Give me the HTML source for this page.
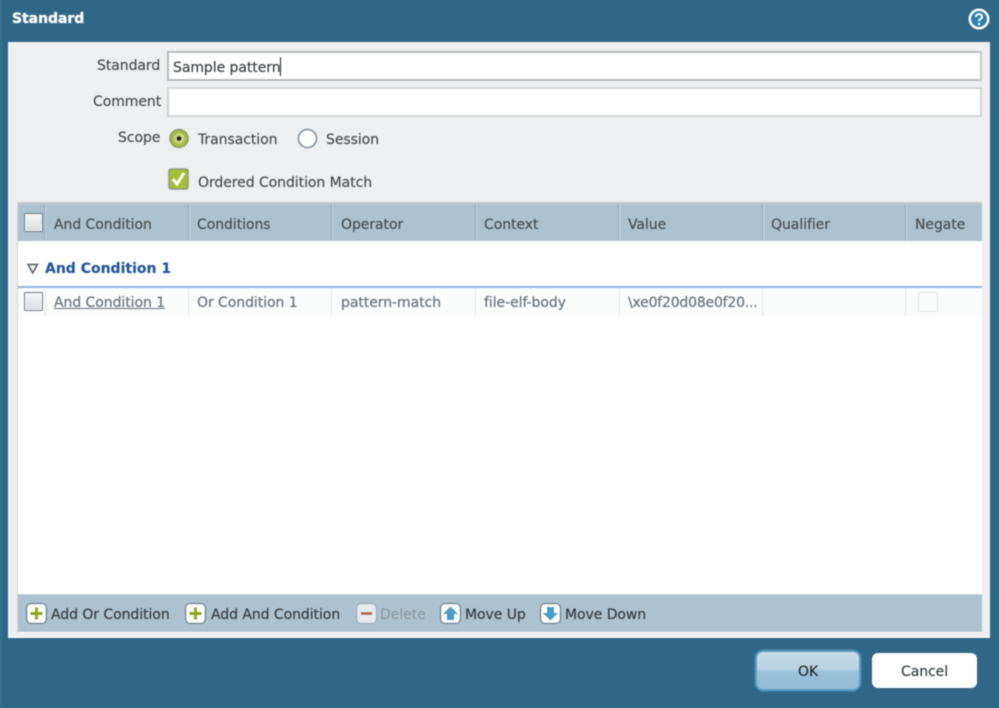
<!DOCTYPE html>
<html><head><meta charset="utf-8">
<style>
html,body{margin:0;padding:0;background:#306786}
body{width:999px;height:708px;overflow:hidden;position:relative;font-family:"DejaVu Sans","Liberation Sans",sans-serif;font-size:14px;color:#444b50}
#r{position:absolute;left:0;top:0;width:999px;height:708px;filter:blur(0.5px);overflow:hidden}
#r div,#r span.t{position:absolute;box-sizing:border-box;white-space:nowrap}
.t{position:absolute;line-height:18px;white-space:nowrap;letter-spacing:-.06px;text-shadow:0 0 .6px rgba(50,55,60,.55)}
.th{top:216px;color:#454d52}
.td{top:294px;color:#67737b}
.ft{top:606px;color:#33393d}
.sep{top:204px;width:2px;height:37px;background:#c5d5df;border-left:1px solid #93aaba}
.sep2{top:288px;width:1px;height:28px;background:#e4e7e9}
.ib{width:21px;height:21px;top:603px;border:1px solid #5e7686;border-radius:5px;background:#fff;box-shadow:inset 0 0 2px #cfd8de}
.cb{left:24px;width:19px;height:19px;background:linear-gradient(#f6f7f8,#d9dde0);border:1.5px solid #737e86;box-shadow:inset 0 0 0 1px #f2f3f4;border-radius:1px}
svg{position:absolute}
</style></head><body><div id="r">
<div style="left:0;top:0;width:2px;height:708px;background:#3a7191"></div>
<span class="t" style="left:12px;top:10px;color:#fff;font-weight:bold;font-size:14px;letter-spacing:-.05px;text-shadow:0 0 1px #fff">Standard</span>
<svg style="left:967px;top:7px" width="24" height="24" viewBox="0 0 24 24"><circle cx="12" cy="12" r="10.500" fill="#fff"/><circle cx="12" cy="12" r="8" fill="#2f7fb4"/><path d="M9 10c0-4 6-4 6 0 0 2-3 2-3 4" fill="none" stroke="#fff" stroke-width="2"/><circle cx="12" cy="17" r="1.200" fill="#fff"/></svg>

<div style="left:8px;top:42px;width:982px;height:596px;background:#eeeff0;border-bottom:2px solid #f7f8f8"></div>

<span class="t" style="left:97px;top:57px">Standard</span>
<div style="left:167px;top:51px;width:815px;height:30px;background:#fff;border:2px solid #b9bcbc;border-right-color:#c8caca"></div>
<span class="t" style="left:173px;top:59px;color:#363b3f">Sample pattern</span>
<div style="left:280px;top:57px;width:1px;height:19px;background:#222"></div>
<span class="t" style="left:93px;top:93px">Comment</span>
<div style="left:167px;top:87px;width:815px;height:30px;background:#fff;border:2px solid #d2d4d4"></div>
<span class="t" style="left:118px;top:129px">Scope</span>
<svg style="left:167px;top:126px" width="26" height="26" viewBox="0 0 26 26"><circle cx="12" cy="12.500" r="9" fill="#a4bf33" stroke="#8b9a80" stroke-width="1.500"/><circle cx="12" cy="12.500" r="5.500" fill="#c6d37c"/><circle cx="12" cy="12.500" r="2.300" fill="#222"/></svg>
<span class="t" style="left:198px;top:131px">Transaction</span>
<svg style="left:296px;top:126px" width="26" height="26" viewBox="0 0 26 26"><circle cx="11.500" cy="12.500" r="9" fill="#fff" stroke="#8d9ca8" stroke-width="1.800"/></svg>
<span class="t" style="left:326px;top:131px">Session</span>
<svg style="left:167px;top:167px" width="24" height="24" viewBox="0 0 24 24"><rect x="2" y="2" width="19" height="20" rx="2" fill="#a4bf33" stroke="#8f9a85" stroke-width="1.500"/><path d="M6 12l4 5 7-11" fill="none" stroke="#fff" stroke-width="3"/></svg>
<span class="t" style="left:198px;top:174px">Ordered Condition Match</span>

<div style="left:17px;top:202px;width:965px;height:431px;background:#fff;border-top:2px solid #c6c8c8;border-left:1px solid #d4d6d6"></div>
<div style="left:18px;top:204px;width:964px;height:37px;background:#adc2d1"></div>
<div class="cb" style="top:213px"></div>
<div class="sep" style="left:44px"></div><div class="sep" style="left:188px"></div><div class="sep" style="left:331px"></div><div class="sep" style="left:475px"></div><div class="sep" style="left:618px"></div><div class="sep" style="left:762px"></div><div class="sep" style="left:905px"></div>
<span class="t th" style="left:54px">And Condition</span>
<span class="t th" style="left:197px">Conditions</span>
<span class="t th" style="left:341px">Operator</span>
<span class="t th" style="left:484px">Context</span>
<span class="t th" style="left:628px">Value</span>
<span class="t th" style="left:771px">Qualifier</span>
<span class="t th" style="left:915px">Negate</span>

<svg style="left:26px;top:262px" width="14" height="14" viewBox="0 0 14 14"><path d="M2 2.500h9.500L6.700 11z" fill="#eef0f1" stroke="#5a6368" stroke-width="1.500"/></svg>
<span class="t" style="left:45px;top:260px;font-weight:bold;color:#22579e;letter-spacing:0">And Condition 1</span>
<div style="left:18px;top:286px;width:964px;height:2px;background:#8fb4e2"></div>
<div style="left:18px;top:288px;width:964px;height:28px;background:#fbfcfc"></div>
<div class="cb" style="top:292px"></div>
<div class="sep2" style="left:45px"></div><div class="sep2" style="left:188px"></div><div class="sep2" style="left:331px"></div><div class="sep2" style="left:475px"></div><div class="sep2" style="left:619px"></div><div class="sep2" style="left:762px"></div><div class="sep2" style="left:905px"></div>
<span class="t td" style="left:54px;text-decoration:underline">And Condition 1</span>
<span class="t td" style="left:197px">Or Condition 1</span>
<span class="t td" style="left:341px">pattern-match</span>
<span class="t td" style="left:484px">file-elf-body</span>
<span class="t td" style="left:628px;letter-spacing:-.2px">\xe0f20d08e0f20...</span>
<div style="left:918px;top:292px;width:20px;height:20px;background:#f9fafa;border:1px solid #e2e5e6;border-radius:2px"></div>

<div style="left:18px;top:594px;width:964px;height:38px;background:#adc2d1;border-top:1px solid #c3d2dc"></div>

<div class="ib" style="left:26px"></div>
<svg style="left:26px;top:603px" width="21" height="21" viewBox="0 0 21 21"><path d="M10.500 4.500v12M4.500 10.500h12" stroke="#8caa1f" stroke-width="3"/></svg>
<span class="t ft" style="left:51px">Add Or Condition</span>
<div class="ib" style="left:185px"></div>
<svg style="left:185px;top:603px" width="21" height="21" viewBox="0 0 21 21"><path d="M10.500 4.500v12M4.500 10.500h12" stroke="#8caa1f" stroke-width="3"/></svg>
<span class="t ft" style="left:211px">Add And Condition</span>
<div class="ib" style="left:356px;background:#e6ebef;border-color:#97a9b6"></div>
<svg style="left:356px;top:603px" width="21" height="21" viewBox="0 0 21 21"><path d="M5 10.500h11" stroke="#a8604c" stroke-width="2.500"/></svg>
<span class="t ft" style="left:380px;color:#8b979f;text-shadow:none">Delete</span>
<div class="ib" style="left:440px"></div>
<svg style="left:440px;top:603px" width="21" height="21" viewBox="0 0 21 21"><path d="M10.500 3.500L18 11h-4v6H7v-6H3z" fill="#4a9cc7"/></svg>
<span class="t ft" style="left:465px">Move Up</span>
<div class="ib" style="left:540px"></div>
<svg style="left:540px;top:603px" width="21" height="21" viewBox="0 0 21 21"><path d="M10.500 17.500L18 10h-4V4H7v6H3z" fill="#4a9cc7"/></svg>
<span class="t ft" style="left:565px">Move Down</span>

<div style="left:755px;top:650px;width:106px;height:41px;border-radius:8px;background:linear-gradient(#c6dae7 0%,#b9d2e2 45%,#99c0d9 55%,#95bdd7 100%);border:2px solid #5c9dc3;box-shadow:0 0 2px #4d93ba"></div>
<span class="t" style="left:798px;top:663px;color:#20272b">OK</span>
<div style="left:872px;top:653px;width:105px;height:35px;border-radius:6px;background:#fff"></div>
<span class="t" style="left:901px;top:663px;color:#33393d">Cancel</span>
</div></body></html>
